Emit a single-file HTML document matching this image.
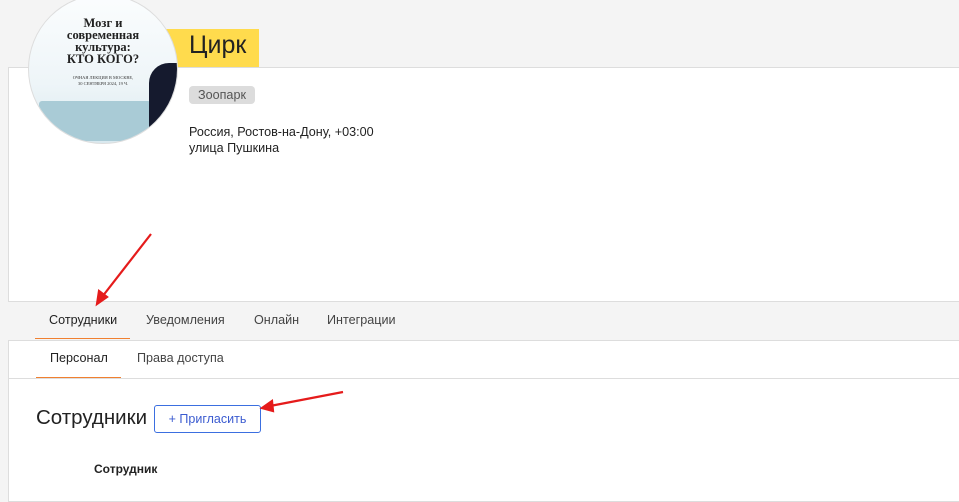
<!DOCTYPE html>
<html><head><meta charset="utf-8"><style>
body{margin:0;width:959px;height:481px;background:#f4f4f4;font-family:"Liberation Sans",sans-serif;position:relative;overflow:hidden;color:#222}
.a{position:absolute}
</style></head><body>
<div class="a" style="left:8px;top:67px;width:960px;height:233px;background:#fff;border:1px solid #ddd"></div>
<div class="a" style="left:165px;top:29px;width:94px;height:38px;background:#ffdb4d"></div>
<div class="a" style="left:189px;top:31px;font-size:25px;color:#222">Цирк</div>
<div class="a" style="left:28px;top:-6px;width:148px;height:148px;border-radius:50%;overflow:hidden;background:linear-gradient(#fbfdfe 0%,#eef5f8 60%,#d9e9ef 100%);border:1px solid #ddd">
 <div class="a" style="left:0;top:22px;width:148px;text-align:center;font-family:'Liberation Serif',serif;font-weight:bold;font-size:12.5px;line-height:12px;color:#222">Мозг и<br>современная<br>культура:<br>КТО КОГО?</div>
 <div class="a" style="left:0;top:80px;width:148px;text-align:center;font-family:'Liberation Serif',serif;font-size:4.5px;line-height:6px;color:#333">ОЧНАЯ ЛЕКЦИЯ В МОСКВЕ,<br>30 СЕНТЯБРЯ 2024, 19 Ч.</div>
 <div class="a" style="left:10px;top:106px;width:112px;height:40px;background:#a9cbd6;border-radius:3px"></div>
 <div class="a" style="left:120px;top:68px;width:30px;height:70px;background:#151a2e;border-radius:20px 0 0 0"></div>
</div>
<div class="a" style="left:189px;top:86px;background:#dcdcdc;border-radius:4px;padding:2px 9px;font-size:12.6px;color:#555">Зоопарк</div>
<div class="a" style="left:189px;top:124px;font-size:12.6px;line-height:16px;color:#222">Россия, Ростов-на-Дону, +03:00<br>улица Пушкина</div>
<div class="a" style="left:49px;top:313px;font-size:12.6px;color:#222">Сотрудники</div>
<div class="a" style="left:146px;top:313px;font-size:12.6px;color:#444">Уведомления</div>
<div class="a" style="left:254px;top:313px;font-size:12.6px;color:#444">Онлайн</div>
<div class="a" style="left:327px;top:313px;font-size:12.6px;color:#444">Интеграции</div>
<div class="a" style="left:35px;top:338px;width:95px;height:1px;background:#f08030"></div>
<div class="a" style="left:8px;top:340px;width:960px;height:160px;background:#fff;border:1px solid #ddd"></div>
<div class="a" style="left:9px;top:378px;width:960px;height:1px;background:#ddd"></div>
<div class="a" style="left:50px;top:351px;font-size:12.6px;color:#222">Персонал</div>
<div class="a" style="left:137px;top:351px;font-size:12.6px;color:#444">Права доступа</div>
<div class="a" style="left:36px;top:377px;width:85px;height:1px;background:#f08030"></div>
<div class="a" style="left:36px;top:406px;font-size:20.5px;color:#222">Сотрудники</div>
<div class="a" style="left:154px;top:405px;width:107px;height:28px;border:1px solid #3b6fe0;border-radius:3px;box-sizing:border-box;font-size:12.5px;color:#3b5bd0;text-align:center;line-height:26px;background:#fff">+ Пригласить</div>
<div class="a" style="left:94px;top:462px;font-size:12px;font-weight:bold;color:#222">Сотрудник</div>
<svg class="a" style="left:0;top:0" width="959" height="481">
<g stroke="#e51b1b" stroke-width="2.2" fill="#e51b1b">
<line x1="151" y1="234" x2="102" y2="297"/>
<polygon points="97,304 99,291 107,297"/>
<line x1="343" y1="392" x2="270" y2="406"/>
<polygon points="262,408 272,401 273,411"/>
</g></svg>
</body></html>
